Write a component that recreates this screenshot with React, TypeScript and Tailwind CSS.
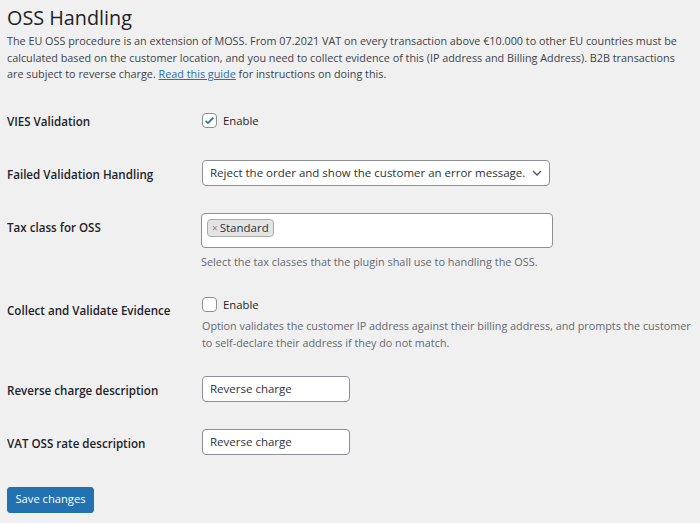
import React from 'react'

const font = { fontFamily: '"Open Sans", "Noto Sans", sans-serif' }

function Label({ children, className = '' }: { children: React.ReactNode; className?: string }) {
  return (
    <div className={`w-[195px] shrink-0 text-[11.6px] font-semibold leading-4 text-[#1d2327] ${className}`}>
      {children}
    </div>
  )
}

function Checkbox({ checked }: { checked?: boolean }) {
  return (
    <span className="flex h-[15px] w-[15px] items-center justify-center rounded-[4px] border border-[#8c8f94] bg-white">
      {checked && (
        <svg width="13" height="13" viewBox="0 0 20 20">
          <path d="M4 10.5l3.5 3.5L16 5.5" fill="none" stroke="#2271b1" strokeWidth="2.6" />
        </svg>
      )}
    </span>
  )
}

export default function App() {
  return (
    <div className="min-h-[523px] bg-[#f0f0f1] pl-[7px] pr-2 pt-[6px] text-[#3c434a]" style={font}>
      <h2 className="text-[19.8px] font-medium leading-6 text-[#1d2327]">OSS Handling</h2>
      <p className="mt-[3px] text-[10.8px] leading-[16.5px] whitespace-nowrap">
        The EU OSS procedure is an extension of MOSS. From 07.2021 VAT on every transaction above €10.000 to other EU countries must be
        <br />
        calculated based on the customer location, and you need to collect evidence of this (IP address and Billing Address). B2B transactions
        <br />
        are subject to reverse charge.{' '}
        <a href="#" className="text-[#2271b1] underline">Read this guide</a> for instructions on doing this.
      </p>

      <div className="mt-[30px] flex h-4 items-center">
        <Label className="pt-[2px]">VIES Validation</Label>
        <div className="flex items-center gap-[6px] text-[11.3px] leading-4 text-[#1d2327]">
          <Checkbox checked />
          <span>Enable</span>
        </div>
      </div>

      <div className="mt-[31px] flex items-center">
        <Label className="pt-[4px]">Failed Validation Handling</Label>
        <div className="flex h-[26px] w-[348px] items-center justify-between rounded-[4px] border border-[#8c8f94] bg-white pl-[7px] pr-[6px] text-[11.5px] text-[#2c3338]">
          <span className="whitespace-nowrap">Reject the order and show the customer an error message.</span>
          <svg width="12" height="12" viewBox="0 0 12 12">
            <path d="M2 4l4 4 4-4" fill="none" stroke="#50575e" strokeWidth="1.4" />
          </svg>
        </div>
      </div>

      <div className="mt-[27px] flex items-start">
        <Label className="pt-[7px]">Tax class for OSS</Label>
        <div className="-ml-px">
          <div className="flex h-[35px] w-[352px] items-start rounded-[4px] border border-[#8c8f94] bg-white pl-[5px] pt-[5px]">
            <span className="inline-flex h-[18px] items-center gap-[2px] rounded-[4px] border border-[#aaa] bg-[#e4e4e4] px-[4px] text-[11.5px] leading-4 text-[#2c3338]">
              <span className="text-[10px] text-[#888]">×</span>Standard
            </span>
          </div>
          <div className="mt-[6px] text-[10.9px] leading-4 text-[#646970] whitespace-nowrap">
            Select the tax classes that the plugin shall use to handling the OSS.
          </div>
        </div>
      </div>

      <div className="mt-[27px] flex items-start">
        <Label className="pt-[6px]">Collect and Validate Evidence</Label>
        <div>
          <div className="flex items-center gap-[6px] text-[11.3px] leading-4 text-[#1d2327]">
            <Checkbox />
            <span>Enable</span>
          </div>
          <div className="mt-[4px] text-[10.8px] leading-[17px] text-[#646970] whitespace-nowrap">
            Option validates the customer IP address against their billing address, and prompts the customer
            <br />
            to self-declare their address if they do not match.
          </div>
        </div>
      </div>

      <div className="mt-[25px] flex items-center">
        <Label className="pt-[4px]">Reverse charge description</Label>
        <div className="flex h-[26px] w-[148px] items-center rounded-[4px] border border-[#8c8f94] bg-white px-[7px] text-[11.5px] text-[#2c3338]">
          Reverse charge
        </div>
      </div>

      <div className="mt-[27px] flex items-center">
        <Label className="pt-[4px]">VAT OSS rate description</Label>
        <div className="flex h-[26px] w-[148px] items-center rounded-[4px] border border-[#8c8f94] bg-white px-[7px] text-[11.5px] text-[#2c3338]">
          Reverse charge
        </div>
      </div>

      <button className="mt-[32px] h-[26px] w-[87px] rounded-[3px] border border-[#2271b1] bg-[#2271b1] text-[11.2px] text-white">
        Save changes
      </button>
    </div>
  )
}
